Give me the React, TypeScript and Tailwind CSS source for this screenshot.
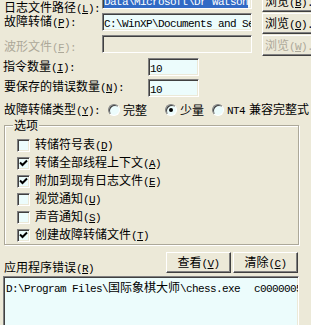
import React from "react";

const mono = "font-['Liberation_Mono',monospace] text-[11px] tracking-[-0.6px]";
const sunken =
  "border border-t-[#808080] border-l-[#808080] border-b-white border-r-white shadow-[inset_1px_1px_0_#404040,inset_-1px_-1px_0_#ece9d8]";
const raised =
  "border border-t-white border-l-white border-b-[#404040] border-r-[#404040] shadow-[inset_-1px_-1px_0_#808080]";
const field = "bg-[#ecfcfc]";

function Lbl({ zh, k, tail = "", dim }: { zh: string; k: string; tail?: string; dim?: boolean }) {
  return (
    <span className={`whitespace-nowrap ${dim ? "text-[#aca899]" : ""}`}>
      {zh}
      <span className={mono}>
        (<span className="underline underline-offset-[1px]">{k}</span>){tail}
      </span>
    </span>
  );
}

function Btn({ zh, k, tail = "", dim, w = "w-[66px]" }: { zh: string; k: string; tail?: string; dim?: boolean; w?: string }) {
  return (
    <div className={`${raised} ${w} h-[21px] shrink-0 flex items-center justify-center bg-[#ece9d8] overflow-hidden`}>
      <Lbl zh={zh} k={k} tail={tail} dim={dim} />
    </div>
  );
}

function Radio({ on }: { on?: boolean }) {
  return (
    <span
      className={`w-[12px] h-[12px] rounded-full border border-t-[#808080] border-l-[#808080] border-b-white border-r-white shadow-[inset_1px_1px_0_#404040] ${field} flex items-center justify-center shrink-0`}
    >
      {on && <span className="w-[4px] h-[4px] rounded-full bg-black" />}
    </span>
  );
}

function Check({ on, zh, k }: { on?: boolean; zh: string; k: string }) {
  return (
    <div className="flex items-center h-[18px] pl-[12px]">
      <span className={`${sunken} ${field} w-[13px] h-[13px] shrink-0 flex items-center justify-center`}>
        {on && (
          <svg width="9" height="9" viewBox="0 0 9 9">
            <path d="M1 3.5 L3.5 6 L8 1.5" stroke="#000" strokeWidth="2" fill="none" />
          </svg>
        )}
      </span>
      <span className="ml-[5px]">
        <Lbl zh={zh} k={k} />
      </span>
    </div>
  );
}

export default function App() {
  const opts = [
    { zh: "转储符号表", k: "D", on: false },
    { zh: "转储全部线程上下文", k: "A", on: true },
    { zh: "附加到现有日志文件", k: "E", on: true },
    { zh: "视觉通知", k: "U", on: false },
    { zh: "声音通知", k: "S", on: false },
    { zh: "创建故障转储文件", k: "T", on: true },
  ];

  return (
    <div className="w-[311px] h-[325px] overflow-hidden bg-[#ece9d8] text-black text-[12px] leading-[12px] font-['Noto_Sans_CJK_SC',sans-serif]">
      {/* path rows */}
      <div className="flex h-[22px] mt-[-9px]">
        <div className="w-[102px] pl-[4px] pt-[10px] shrink-0">
          <Lbl zh="日志文件路径" k="L" tail=":" />
        </div>
        <div className={`${sunken} ${field} w-[150px] h-[18px] shrink-0 overflow-hidden pl-[1px] pt-[2px]`}>
          <span className={`${mono} bg-[#316ac5] text-white whitespace-pre`}>{"Data\\Microsoft\\Dr Watson"}</span>
        </div>
        <div className="ml-[10px]">
          <Btn zh="浏览" k="B" tail="..." />
        </div>
      </div>
      <div className="flex h-[22px]">
        <div className="w-[102px] pl-[4px] pt-[2px] shrink-0">
          <Lbl zh="故障转储" k="P" tail=":" />
        </div>
        <div className={`${sunken} ${field} w-[150px] h-[18px] shrink-0 overflow-hidden pl-[1px] pt-[2px]`}>
          <span className={`${mono} whitespace-pre`}>{"C:\\WinXP\\Documents and Settings"}</span>
        </div>
        <div className="ml-[10px]">
          <Btn zh="浏览" k="O" tail="..." />
        </div>
      </div>
      <div className="flex h-[22px]">
        <div className="w-[102px] pl-[4px] pt-[5px] shrink-0">
          <Lbl zh="波形文件" k="F" tail=":" dim />
        </div>
        <div className={`${sunken} w-[150px] h-[18px] shrink-0`} />
        <div className="ml-[10px]">
          <Btn zh="浏览" k="W" tail="..." dim />
        </div>
      </div>

      {/* numeric rows */}
      <div className="flex h-[21px]">
        <div className="w-[148px] pl-[3px] pt-[3px] shrink-0">
          <Lbl zh="指令数量" k="I" tail=":" />
        </div>
        <div className={`${sunken} ${field} mt-[1px] w-[51px] h-[18px] pl-[1px] pt-[2px]`}>
          <span className={mono}>10</span>
        </div>
      </div>
      <div className="flex h-[21px]">
        <div className="w-[148px] pl-[4px] pt-[2px] shrink-0">
          <Lbl zh="要保存的错误数量" k="N" tail=":" />
        </div>
        <div className={`${sunken} ${field} mt-[1px] w-[51px] h-[18px] pl-[1px] pt-[2px]`}>
          <span className={mono}>10</span>
        </div>
      </div>

      {/* dump type */}
      <div className="flex items-center h-[21px] pl-[4px] pt-[1px]">
        <span className="w-[104px] shrink-0">
          <Lbl zh="故障转储类型" k="Y" tail=":" />
        </span>
        <Radio />
        <span className="ml-[3px] w-[42px] shrink-0">完整</span>
        <Radio on />
        <span className="ml-[3px] w-[32px] shrink-0">少量</span>
        <Radio />
        <span className="ml-[3px] whitespace-nowrap">
          <span className={mono}>NT4</span>
          <span className="ml-[4px]">兼容完整式</span>
        </span>
      </div>

      {/* options group */}
      <div className="relative mt-[5px] ml-[4px] w-[295px] h-[120px] border border-[#aca899] shadow-[inset_1px_1px_0_#fff,1px_1px_0_#fff] pt-[10px]">
        <span className="absolute top-[-7px] left-[8px] bg-[#ece9d8] px-[1px]">选项</span>
        {opts.map((o) => (
          <Check key={o.k} zh={o.zh} k={o.k} on={o.on} />
        ))}
      </div>

      {/* application errors */}
      <div className="flex h-[21px] mt-[7px]">
        <div className="w-[166px] pl-[4px] pt-[9px] shrink-0">
          <Lbl zh="应用程序错误" k="R" />
        </div>
        <Btn zh="查看" k="V" w="w-[65px]" />
        <div className="ml-[2px]">
          <Btn zh="清除" k="C" w="w-[65px]" />
        </div>
      </div>
      <div className={`${sunken} ${field} mt-[3px] ml-[3px] w-[296px] h-[60px] pl-[2px] pt-[4px] overflow-hidden`}>
        <div className="whitespace-pre">
          <span className={mono}>{"D:\\Program Files\\"}</span>国际象棋大师
          <span className={mono}>{"\\chess.exe"}</span>
          <span className={`${mono} ml-[14px]`}>c0000005</span>
        </div>
      </div>
    </div>
  );
}
